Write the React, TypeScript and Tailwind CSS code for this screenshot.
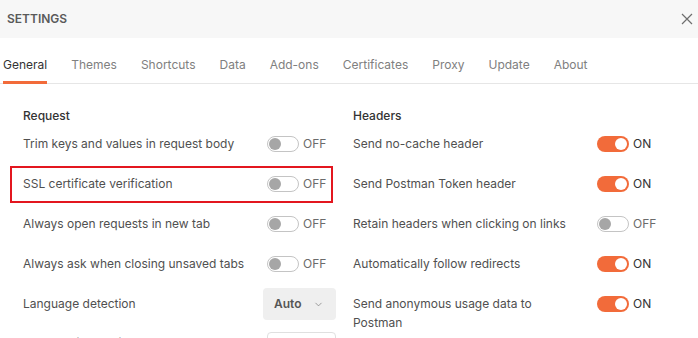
import { ChevronDown } from 'lucide-react'

const TABS = ['General', 'Themes', 'Shortcuts', 'Data', 'Add-ons', 'Certificates', 'Proxy', 'Update', 'About']

function Toggle({ on }: { on: boolean }) {
  return (
    <div className="flex items-center h-5">
      {on ? (
        <div className="w-[32px] h-[16px] rounded-full bg-[#f26b3a] flex items-center justify-end px-[2px]">
          <div className="w-[12px] h-[12px] rounded-full bg-white" />
        </div>
      ) : (
        <div className="w-[32px] h-[16px] rounded-full bg-white border border-[#c4c4c4] flex items-center px-[1px]">
          <div className="w-[12px] h-[12px] rounded-full bg-[#a6a6a6]" />
        </div>
      )}
      <span className={on ? 'ml-[4px] text-[#333]' : 'ml-[4px] text-[#6b6b6b]'}>{on ? 'ON' : 'OFF'}</span>
    </div>
  )
}

function Row({ label, on, highlight }: { label: string; on: boolean; highlight?: boolean }) {
  return (
    <div className="relative flex items-start h-10 pt-[10px]">
      <div className="w-[244px] pr-5 leading-[19px] text-[#505050]">{label}</div>
      <Toggle on={on} />
      {highlight && (
        <div className="absolute left-[-13px] w-[323px] top-[2px] h-[37px] border-2 border-[#e3161f]" />
      )}
    </div>
  )
}

export default function App() {
  return (
    <div className="w-[698px] h-[338px] overflow-hidden bg-white text-[12px]" style={{ fontFamily: 'Inter, "Noto Sans", sans-serif' }}>
      {/* Header */}
      <div className="h-[38px] bg-[#f7f7f7] flex items-center justify-between pl-[7px] pr-[5px]">
        <span className="text-[12px] font-semibold text-[#5a5a5a]">SETTINGS</span>
        <svg width="12" height="12" viewBox="0 0 12 12" className="text-[#6e6e6e]">
          <path d="M1 1L11 11M11 1L1 11" stroke="currentColor" strokeWidth="1.2" />
        </svg>
      </div>

      {/* Tabs */}
      <div className="h-[46px] border-b border-[#e6e6e6] flex items-end pl-[3px] gap-6">
        {TABS.map((t, i) => (
          <div
            key={t}
            className={
              i === 0
                ? 'h-[36px] border-b-[3px] border-[#f26b3a] text-[#333] flex items-start pt-[8px] mb-[-1px]'
                : 'h-[36px] text-[#808080] flex items-start pt-[8px] mb-[-1px]'
            }
          >
            {t}
          </div>
        ))}
      </div>

      {/* Content */}
      <div className="flex pl-[23px] pt-[24px]">
        <div className="w-[330px]">
          <div className="h-4 leading-4 font-medium text-[#333]">Request</div>
          <Row label="Trim keys and values in request body" on={false} />
          <Row label="SSL certificate verification" on={false} highlight />
          <Row label="Always open requests in new tab" on={false} />
          <Row label="Always ask when closing unsaved tabs" on={false} />
          <div className="flex items-center h-10">
            <div className="w-[240px] text-[#505050]">Language detection</div>
            <div className="w-[73px] h-[32px] bg-[#efefef] rounded-sm flex items-center pl-[11px] pr-[12px] justify-between">
              <span className="font-semibold text-[#555]">Auto</span>
              <ChevronDown className="w-[11px] h-[11px] text-[#777]" strokeWidth={1.5} />
            </div>
          </div>
          <div className="flex items-start h-10 pt-[8px]">
            <div className="w-[244px] text-[#505050] pt-[2px]">Request timeout in ms</div>
            <div className="w-[69px] h-[32px] bg-white border border-[#e0e0e0] rounded-sm" />
          </div>
        </div>
        <div className="w-[330px]">
          <div className="h-4 leading-4 font-medium text-[#333]">Headers</div>
          <Row label="Send no-cache header" on />
          <Row label="Send Postman Token header" on />
          <Row label="Retain headers when clicking on links" on={false} />
          <Row label="Automatically follow redirects" on />
          <Row label="Send anonymous usage data to Postman" on />
        </div>
      </div>
    </div>
  )
}
